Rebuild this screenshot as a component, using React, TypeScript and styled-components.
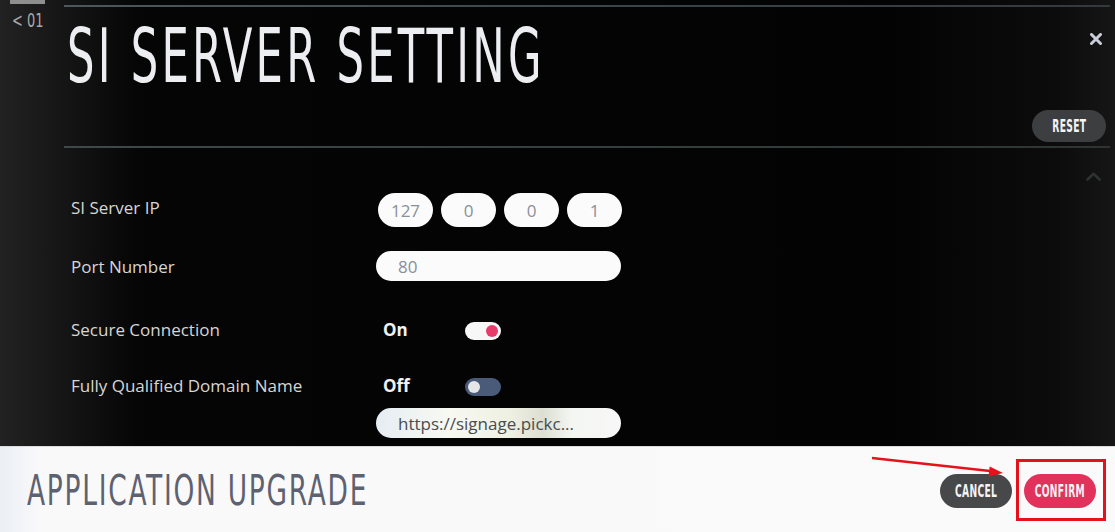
import React from "react"
import styled, { createGlobalStyle } from "styled-components"

const GlobalStyle = createGlobalStyle`
  html, body {
    margin: 0;
    padding: 0;
    background: #000;
  }
  body {
    font-family: "Open Sans", "Liberation Sans", sans-serif;
  }
  * {
    box-sizing: border-box;
  }
`

const narrow = `"DejaVu Sans Condensed", "Liberation Sans", sans-serif`

const Screen = styled.div`
    position: relative;
    width: 1115px;
    height: 532px;
    display: flex;
    flex-direction: column;
    overflow: hidden;
`

const DarkPanel = styled.div`
    height: 446px;
    display: grid;
    grid-template-columns: 64px 1fr;
    padding-right: 5px;
    background: linear-gradient(90deg, #222 0, #181818 50px, #050505 140px, #030303 80%, #0c0c0c 95%, #161616 100%);
`

const Nav = styled.div`
    display: flex;
    flex-direction: column;
`

const NavTab = styled.div`
    width: 35px;
    height: 4px;
    margin-left: 10px;
    background: #8e8e8e;
`

const NavLabel = styled.div`
    margin: 6px 0 0 12px;
    font-family: ${narrow};
    font-size: 20px;
    line-height: 1;
    color: #a8a8a8;
    transform: scaleX(0.72);
    transform-origin: left;
    white-space: nowrap;
`

const Content = styled.div`
    display: flex;
    flex-direction: column;
`

const TopRule = styled.div`
    height: 2px;
    margin-top: 5px;
    background: linear-gradient(90deg, #4e5859, #3a4344 60%, #333a3b);
`

const TitleRow = styled.div`
    display: flex;
    justify-content: space-between;
    align-items: flex-start;
    height: 74px;
    margin-top: 12px;
`

const Title = styled.h1`
    margin: 0 0 0 3px;
    font-family: ${narrow};
    font-weight: 400;
    font-size: 74px;
    line-height: 1;
    letter-spacing: 5px;
    color: #eceef2;
    transform: scaleX(0.65);
    transform-origin: left;
    white-space: nowrap;
`

const CloseButton = styled.div`
    margin: 14px 8px 0 0;
    width: 12px;
    height: 12px;
    display: flex;
`

const ResetRow = styled.div`
    display: flex;
    justify-content: flex-end;
    margin-top: 17px;
    padding-right: 4px;
`

const Pill = styled.div<{ $tone: string; $w: number }>`
    width: ${(p) => p.$w}px;
    height: ${(p) => (p.$w > 73 ? 32 : 34)}px;
    border-radius: 17px;
    background: ${(p) => p.$tone};
    display: flex;
    align-items: center;
    justify-content: center;
`

const PillLabel = styled.span`
    display: inline-block;
    font-family: ${narrow};
    font-weight: 700;
    font-size: 17px;
    color: #f4f4f4;
    transform: scaleX(0.6);
    letter-spacing: 0.5px;
`

const Divider = styled.div`
    height: 2px;
    margin-top: 4px;
    background: linear-gradient(90deg, #3e4a4a, #34403f 50%, #2e3434);
`

const ScrollHint = styled.div`
    height: 45px;
    display: flex;
    justify-content: flex-end;
    align-items: flex-start;
    padding: 24px 9px 0 0;
`

const Form = styled.div`
    display: flex;
    flex-direction: column;
    padding-left: 7px;
`

const FormRow = styled.div<{ $gap: number; $h: number }>`
    display: grid;
    grid-template-columns: 305px 1fr;
    align-items: center;
    height: ${(p) => p.$h}px;
    margin-top: ${(p) => p.$gap}px;
`

const Label = styled.div<{ $lift?: number }>`
    font-size: 17px;
    color: #d6d6d6;
    white-space: nowrap;
    margin-top: ${(p) => -(p.$lift ?? 0)}px;
`

const IpGroup = styled.div`
    display: flex;
    gap: 8px;
    padding-left: 2px;
`

const IpBox = styled.div`
    width: 55px;
    height: 34px;
    border-radius: 17px;
    background: #fbfbfb;
    display: flex;
    align-items: center;
    justify-content: center;
    font-size: 17px;
    color: #8a8f9a;
`

const TextField = styled.div<{ $url?: boolean }>`
    width: 245px;
    height: 30px;
    border-radius: 15px;
    padding-left: 22px;
    display: flex;
    align-items: center;
    font-size: 17px;
    color: ${(p) => (p.$url ? "#4a4c50" : "#8a8f9a")};
    background: ${(p) =>
        p.$url
            ? "linear-gradient(90deg, #e6edf3 0, #f7f9f2 30%, #eef0e2 55%, #dcdfd2 68%, #f4f6f2 80%, #f7f7f7 100%)"
            : "#fbfbfb"};
    white-space: nowrap;
`

const SwitchCell = styled.div`
    display: flex;
    align-items: center;
    padding-left: 7px;
`

const StateText = styled.div`
    width: 82px;
    font-size: 17px;
    font-weight: 700;
    color: #f2f2f2;
    margin-top: -2px;
`

const Toggle = styled.div<{ $on: boolean }>`
    width: 36px;
    height: 18px;
    border-radius: 9px;
    padding: 0 3px;
    display: flex;
    align-items: center;
    justify-content: ${(p) => (p.$on ? "flex-end" : "flex-start")};
    background: ${(p) => (p.$on ? "#f7f7f7" : "#4a5b7a")};
`

const Knob = styled.div<{ $on: boolean }>`
    width: 12px;
    height: 12px;
    border-radius: 50%;
    background: ${(p) => (p.$on ? "#e73b6c" : "#e4e6e8")};
`

const Footer = styled.div`
    flex: 1;
    display: flex;
    align-items: center;
    justify-content: space-between;
    padding: 2px 19px 0 27px;
    background: linear-gradient(90deg, #eaeff5 0, #f9f9fa 40px, #fafafa 100%);
    border-top: 1px solid #dcdcdc;
`

const FooterTitle = styled.div`
    font-family: ${narrow};
    font-size: 42px;
    line-height: 1;
    letter-spacing: 2.5px;
    color: #5e6270;
    transform: scaleX(0.7);
    transform-origin: left;
    white-space: nowrap;
`

const Actions = styled.div`
    display: flex;
    gap: 12px;
`

const ConfirmWrap = styled.div`
    position: relative;
`

const Highlight = styled.div`
    position: absolute;
    top: -15px;
    left: -8px;
    right: -10px;
    bottom: -13px;
    border: 3px solid #e5121b;
    pointer-events: none;
`

const Arrow = styled.svg`
    position: absolute;
    left: 866px;
    top: 452px;
    width: 150px;
    height: 30px;
    overflow: visible;
`

const fields = [
    { label: "Secure Connection", on: true, gap: 39 },
    { label: "Fully Qualified Domain Name", on: false, gap: 38 },
]

export default function App() {
    return (
        <>
            <GlobalStyle />
            <Screen>
                <DarkPanel>
                    <Nav>
                        <NavTab />
                        <NavLabel>&lt; 01</NavLabel>
                    </Nav>
                    <Content>
                        <TopRule />
                        <TitleRow>
                            <Title>SI SERVER SETTING</Title>
                            <CloseButton>
                                <svg width="12" height="12" viewBox="0 0 12 12">
                                    <path d="M1.5 1.5 L10.5 10.5 M10.5 1.5 L1.5 10.5" stroke="#c9ced8" strokeWidth="3" strokeLinecap="round" />
                                </svg>
                            </CloseButton>
                        </TitleRow>
                        <ResetRow>
                            <Pill $tone="#3c3e40" $w={74}>
                                <PillLabel>RESET</PillLabel>
                            </Pill>
                        </ResetRow>
                        <Divider />
                        <ScrollHint>
                            <svg width="15" height="9" viewBox="0 0 15 9">
                                <polyline points="1.5,7.5 7.5,1.8 13.5,7.5" fill="none" stroke="#2e3232" strokeWidth="2.6" strokeLinecap="round" strokeLinejoin="round" />
                            </svg>
                        </ScrollHint>
                        <Form>
                            <FormRow $gap={0} $h={34}>
                                <Label $lift={5}>SI Server IP</Label>
                                <IpGroup>
                                    {["127", "0", "0", "1"].map((part, i) => (
                                        <IpBox key={i}>{part}</IpBox>
                                    ))}
                                </IpGroup>
                            </FormRow>
                            <FormRow $gap={24} $h={30}>
                                <Label>Port Number</Label>
                                <TextField>80</TextField>
                            </FormRow>
                            {fields.map((f) => (
                                <FormRow key={f.label} $gap={f.gap} $h={18}>
                                    <Label $lift={3}>{f.label}</Label>
                                    <SwitchCell>
                                        <StateText>{f.on ? "On" : "Off"}</StateText>
                                        <Toggle $on={f.on}>
                                            <Knob $on={f.on} />
                                        </Toggle>
                                    </SwitchCell>
                                </FormRow>
                            ))}
                            <FormRow $gap={14} $h={30}>
                                <span />
                                <TextField $url>https://signage.pickc...</TextField>
                            </FormRow>
                        </Form>
                    </Content>
                </DarkPanel>
                <Footer>
                    <FooterTitle>APPLICATION UPGRADE</FooterTitle>
                    <Actions>
                        <Pill $tone="#474849" $w={72}>
                            <PillLabel>CANCEL</PillLabel>
                        </Pill>
                        <ConfirmWrap>
                            <Pill $tone="#e2315b" $w={72}>
                                <PillLabel>CONFIRM</PillLabel>
                            </Pill>
                            <Highlight />
                        </ConfirmWrap>
                    </Actions>
                </Footer>
                <Arrow viewBox="0 0 150 30">
                    <line x1="6" y1="6" x2="124" y2="19" stroke="#e5121b" strokeWidth="2.4" />
                    <polygon points="137,21 123.7,14.4 122.5,24.4" fill="#e5121b" />
                </Arrow>
            </Screen>
        </>
    )
}
